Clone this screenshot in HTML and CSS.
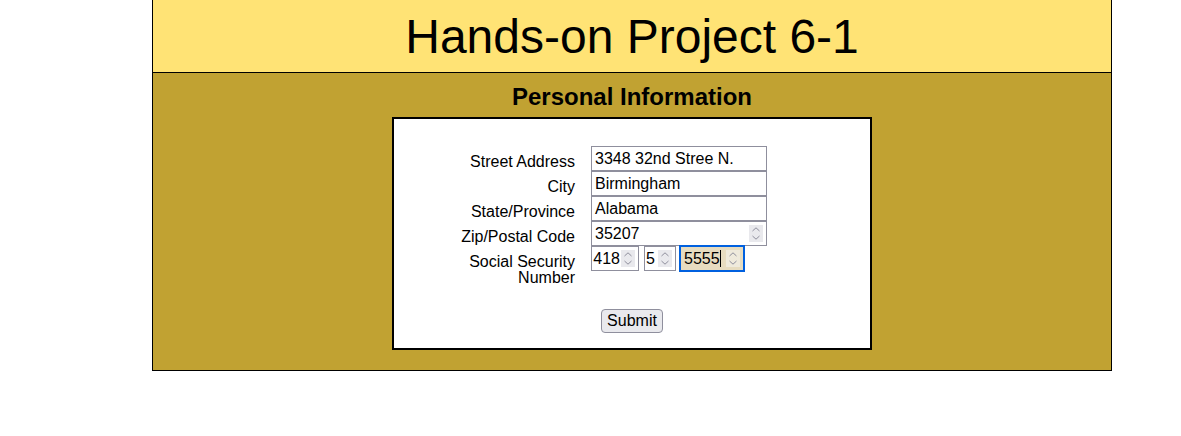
FILE: index.html
```html
<!DOCTYPE html>
<html lang="en">
<head>
<meta charset="utf-8">
<title>Hands-on Project 6-1</title>
<link rel="stylesheet" href="styles.css">
</head>
<body>
<div class="page">
  <header class="head">
    <h1>Hands-on Project 6-1</h1>
  </header>
  <section class="main">
    <h2>Personal Information</h2>
    <form class="card">
      <div class="grid">
        <label class="lbl">Street Address</label>
        <div class="field w11"><span class="val">3348 32nd Stree N.</span></div>

        <label class="lbl">City</label>
        <div class="field w11"><span class="val">Birmingham</span></div>

        <label class="lbl">State/Province</label>
        <div class="field w11"><span class="val">Alabama</span></div>

        <label class="lbl">Zip/Postal Code</label>
        <div class="field w11"><span class="val">35207</span>
          <span class="spin"><svg viewBox="0 0 14 17" width="14" height="17"><path d="M3.5 6 L7 2.8 L10.5 6" /><path d="M3.5 11 L7 14.2 L10.5 11" /></svg></span>
        </div>

        <label class="lbl">Social Security Number</label>
        <div class="ssn">
          <div class="field w3"><span class="val clipl"><span>418</span></span>
            <span class="spin"><svg viewBox="0 0 14 17" width="14" height="17"><path d="M3.5 6 L7 2.8 L10.5 6" /><path d="M3.5 11 L7 14.2 L10.5 11" /></svg></span>
          </div>
          <div class="field w2"><span class="val clipr">5</span>
            <span class="spin"><svg viewBox="0 0 14 17" width="14" height="17"><path d="M3.5 6 L7 2.8 L10.5 6" /><path d="M3.5 11 L7 14.2 L10.5 11" /></svg></span>
          </div>
          <div class="field w4 focus"><span class="val"><span class="caret">5555</span></span>
            <span class="spin"><svg viewBox="0 0 14 17" width="14" height="17"><path d="M3.5 6 L7 2.8 L10.5 6" /><path d="M3.5 11 L7 14.2 L10.5 11" /></svg></span>
          </div>
        </div>
      </div>
      <div class="actions">
        <button type="button" class="btn">Submit</button>
      </div>
    </form>
  </section>
</div>
</body>
</html>
```
FILE: styles.css
```css
html, body {
  margin: 0;
  padding: 0;
  background: #ffffff;
  font-family: "Liberation Sans", Arial, sans-serif;
  color: #000;
}

.page {
  width: 960px;
  margin: 0 0 0 152px;
  box-sizing: border-box;
  border-left: 1px solid #000;
  border-right: 1px solid #000;
}

.head {
  background: #ffe375;
  border-bottom: 1px solid #000;
  padding: 9px 0 8px;
  text-align: center;
}

.head h1 {
  margin: 0;
  font-size: 48px;
  line-height: 55px;
  font-weight: normal;
}

.main {
  background: #c1a232;
  border-bottom: 1px solid #000;
  padding: 10px 0 20px;
}

.main h2 {
  margin: 0 0 6px;
  font-size: 24px;
  line-height: 28px;
  font-weight: bold;
  text-align: center;
}

.card {
  width: 480px;
  box-sizing: border-box;
  margin: 0 auto;
  background: #fff;
  border: 2px solid #000;
  padding: 27px 16px 15px;
}

.grid {
  display: grid;
  grid-template-columns: 140px auto;
  column-gap: 16px;
  align-items: start;
  margin-left: 25px;
}

.lbl {
  font-size: 16px;
  line-height: 16px;
  padding-top: 8px;
  text-align: right;
}

.field {
  display: flex;
  align-items: center;
  height: 25px;
  box-sizing: border-box;
  border: 1px solid #8f8f9d;
  background: #fff;
  overflow: hidden;
}

.w11 { width: 176px; }
.w3 { width: 48px; }
.w2 { width: 32px; }
.w4 { width: 64px; }

.val {
  flex: 1;
  min-width: 0;
  padding-left: 3px;
  font-size: 16px;
  line-height: 18px;
  white-space: nowrap;
  overflow: hidden;
}

.clipl {
  display: flex;
  justify-content: flex-end;
  padding-left: 0;
}

.clipl span { flex-shrink: 0; }

.clipr { padding-left: 1px; }

.spin {
  flex: none;
  width: 14px;
  height: 17px;
  margin: 0 3px 0 1px;
  background: #e9e9ed;
  display: flex;
}

.spin svg path {
  fill: none;
  stroke: #8f8f9d;
  stroke-width: 1;
}

.ssn {
  display: flex;
  align-items: center;
}

.ssn .w3 { margin-right: 5px; }
.ssn .w2 { margin-right: 4px; }

.focus {
  border-color: #0060df;
  outline: 1px solid #0060df;
  background: #e7dcc0;
}

.focus .spin { background: #efeadc; }

.caret {
  border-right: 1px solid #000;
  padding-right: 0;
}

.actions {
  text-align: center;
  margin-top: 23px;
}

.btn {
  font-family: "Liberation Sans", Arial, sans-serif;
  font-size: 16px;
  line-height: 18px;
  padding: 2px 5px;
  border: 1px solid #8f8f9d;
  border-radius: 4px;
  background: #e9e9ed;
  color: #000;
  margin: 0;
}
```
